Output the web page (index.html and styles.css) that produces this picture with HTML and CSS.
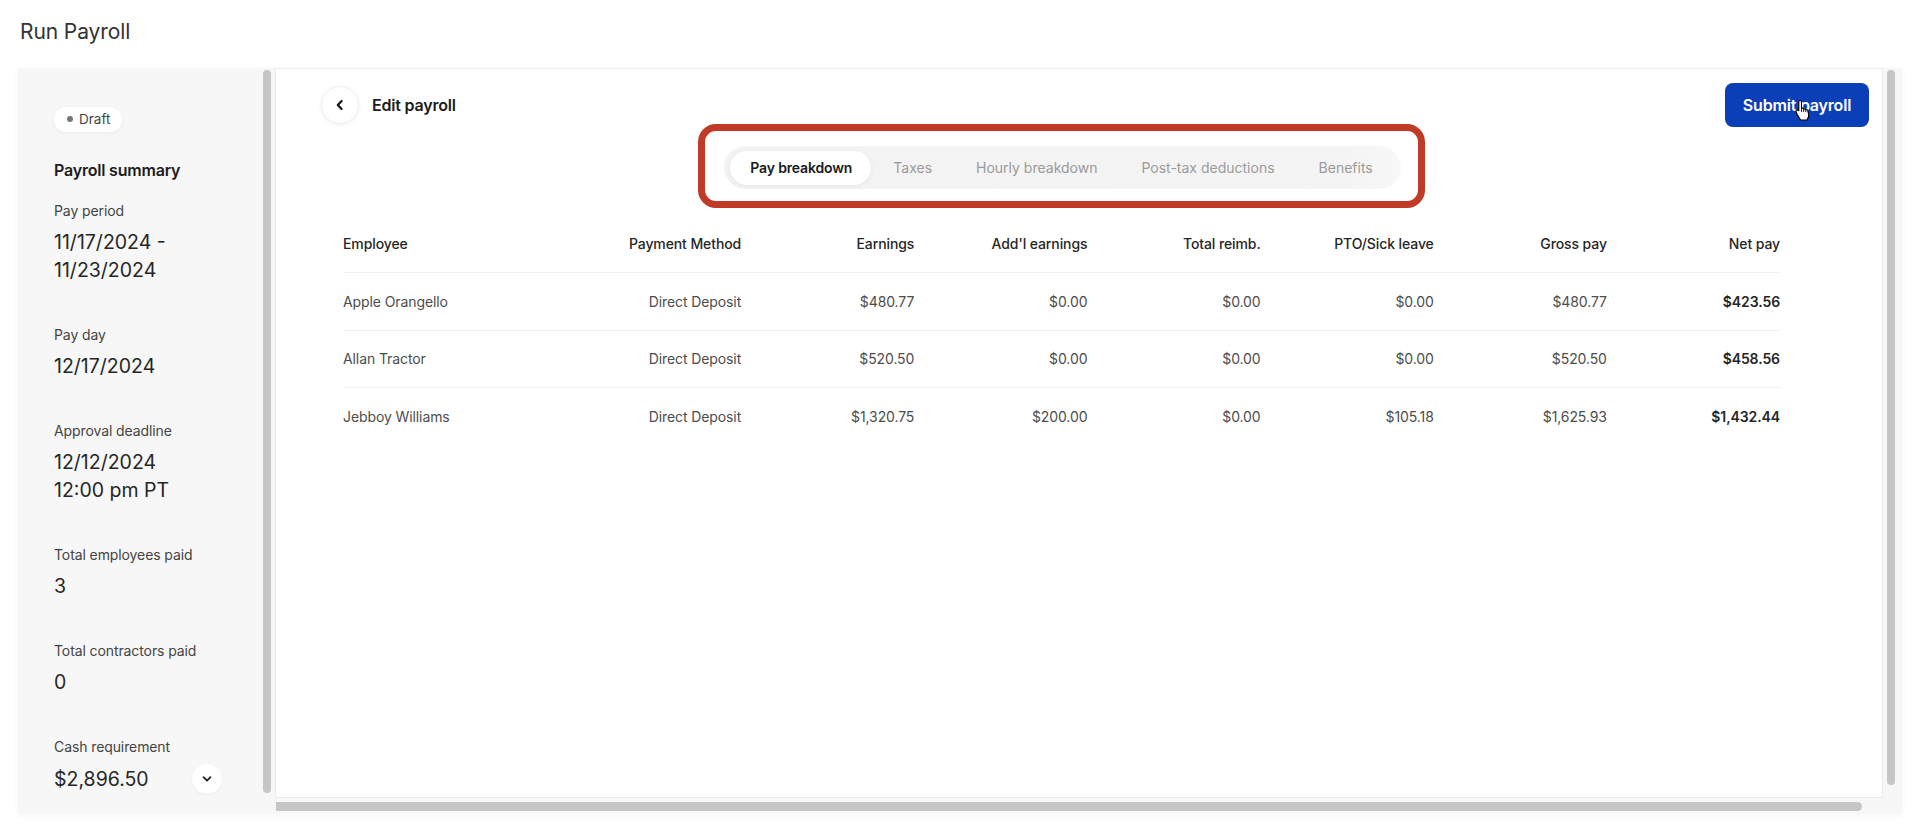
FILE: index.html
```html
<!DOCTYPE html>
<html lang="en">
<head>
<meta charset="utf-8">
<title>Run Payroll</title>
<link rel="stylesheet" href="styles.css">
</head>
<body>
<h1 class="page-title">Run Payroll</h1>
<div class="frame">
  <aside class="sidebar">
    <div class="sidebar-body">
      <span class="status-pill"><span class="status-dot"></span>Draft</span>
      <h2 class="summary-title">Payroll summary</h2>
      <div class="sum-item">
        <div class="sum-label">Pay period</div>
        <div class="sum-value">11/17/2024 -<br>11/23/2024</div>
      </div>
      <div class="sum-item">
        <div class="sum-label">Pay day</div>
        <div class="sum-value">12/17/2024</div>
      </div>
      <div class="sum-item">
        <div class="sum-label">Approval deadline</div>
        <div class="sum-value">12/12/2024<br>12:00 pm PT</div>
      </div>
      <div class="sum-item">
        <div class="sum-label">Total employees paid</div>
        <div class="sum-value">3</div>
      </div>
      <div class="sum-item">
        <div class="sum-label">Total contractors paid</div>
        <div class="sum-value">0</div>
      </div>
      <div class="sum-item">
        <div class="sum-label">Cash requirement</div>
        <div class="sum-value cash-row">
          <span>$2,896.50</span>
          <span class="round-btn small">
            <svg width="12" height="12" viewBox="0 0 12 12"><path d="M2.5 4.2 6 7.7l3.5-3.5" fill="none" stroke="#222" stroke-width="1.8" stroke-linecap="round" stroke-linejoin="round"/></svg>
          </span>
        </div>
      </div>
    </div>
    <div class="vthumb side-thumb"></div>
  </aside>

  <main class="main-col">
    <div class="panel-row">
      <section class="panel">
        <header class="panel-head">
          <div class="head-left">
            <span class="round-btn back">
              <svg width="14" height="14" viewBox="0 0 14 14"><path d="M8.6 3 4.8 7l3.8 4" fill="none" stroke="#111" stroke-width="2.2" stroke-linecap="round" stroke-linejoin="round"/></svg>
            </span>
            <span class="head-title">Edit payroll</span>
          </div>
          <button class="submit-btn">Submit payroll
            <svg class="cursor" width="17" height="22" viewBox="0 0 17 22"><path d="M5 1.5c.8 0 1.5.7 1.5 1.5v6.3c.8-.5 1.9-.2 2.2.7.8-.4 1.8-.1 2.1.8.8-.3 1.8.1 2 .9l.8 3.4c.4 1.6 0 3.3-1 4.6L12 21H5.6L2.2 15.6 1.1 13c-.4-.8 0-1.7.8-2 .7-.3 1.5 0 1.9.6V3c0-.8.5-1.5 1.2-1.5z" fill="#fff" stroke="#000" stroke-width="1.1" stroke-linejoin="round"/><path d="M6.5 9.5v3M8.7 10.2v2.4M10.8 11v1.8" stroke="#000" stroke-width=".9" stroke-linecap="round"/></svg>
          </button>
        </header>

        <div class="content">
          <div class="tabs-wrap">
            <div class="highlight">
              <nav class="tabbar">
                <span class="tab active">Pay breakdown</span>
                <span class="tab">Taxes</span>
                <span class="tab">Hourly breakdown</span>
                <span class="tab">Post-tax deductions</span>
                <span class="tab">Benefits</span>
              </nav>
            </div>
          </div>

          <div class="table">
            <div class="trow thead">
              <div class="cell left">Employee</div>
              <div class="cell">Payment Method</div>
              <div class="cell">Earnings</div>
              <div class="cell">Add'l earnings</div>
              <div class="cell">Total reimb.</div>
              <div class="cell">PTO/Sick leave</div>
              <div class="cell">Gross pay</div>
              <div class="cell">Net pay</div>
            </div>
            <div class="trow">
              <div class="cell left">Apple Orangello</div>
              <div class="cell">Direct Deposit</div>
              <div class="cell">$480.77</div>
              <div class="cell">$0.00</div>
              <div class="cell">$0.00</div>
              <div class="cell">$0.00</div>
              <div class="cell">$480.77</div>
              <div class="cell net">$423.56</div>
            </div>
            <div class="trow">
              <div class="cell left">Allan Tractor</div>
              <div class="cell">Direct Deposit</div>
              <div class="cell">$520.50</div>
              <div class="cell">$0.00</div>
              <div class="cell">$0.00</div>
              <div class="cell">$0.00</div>
              <div class="cell">$520.50</div>
              <div class="cell net">$458.56</div>
            </div>
            <div class="trow">
              <div class="cell left">Jebboy Williams</div>
              <div class="cell">Direct Deposit</div>
              <div class="cell">$1,320.75</div>
              <div class="cell">$200.00</div>
              <div class="cell">$0.00</div>
              <div class="cell">$105.18</div>
              <div class="cell">$1,625.93</div>
              <div class="cell net">$1,432.44</div>
            </div>
          </div>
        </div>
      </section>
      <div class="vthumb main-thumb"></div>
    </div>
    <div class="hthumb"></div>
  </main>
</div>
</body>
</html>
```

FILE: styles.css
```css
* { box-sizing: border-box; }

html, body {
  margin: 0;
  padding: 0;
  background: #ffffff;
  font-family: Inter, "Liberation Sans", Arial, sans-serif;
  color: #222;
}

body {
  width: 1920px;
  height: 828px;
  overflow: hidden;
}

.page-title {
  margin: 0;
  padding: 20px 0 0 20px;
  font-size: 21px;
  line-height: 24px;
  font-weight: 400;
  color: #333;
  letter-spacing: -0.1px;
}

.frame {
  margin: 24px 0 0 18px;
  width: 1884px;
  height: 746px;
  display: flex;
  background: #f7f7f7;
  box-shadow: 0 2px 8px rgba(0,0,0,0.03);
}

/* ---------- Sidebar ---------- */
.sidebar {
  display: flex;
  width: 253px;
  flex: none;
}

.sidebar-body {
  width: 245px;
  flex: none;
  padding: 38px 41px 0 36px;
}

.status-pill {
  display: inline-flex;
  align-items: center;
  gap: 6px;
  height: 25px;
  padding: 0 12px 0 13px;
  background: #fff;
  border-radius: 12px;
  box-shadow: 0 1px 4px rgba(0,0,0,0.06);
  font-size: 13.5px;
  color: #444;
}

.status-dot {
  width: 6px;
  height: 6px;
  border-radius: 50%;
  background: #777;
}

.summary-title {
  margin: 26px 0 0;
  font-size: 16px;
  line-height: 24px;
  font-weight: 600;
  color: #1c1c1c;
  letter-spacing: -0.2px;
}

.sum-item { margin-top: 41px; }
.summary-title + .sum-item { margin-top: 19px; }

.sum-label {
  font-size: 14px;
  line-height: 20px;
  color: #444;
  letter-spacing: -0.1px;
}

.sum-value {
  margin-top: 7px;
  font-size: 19.5px;
  line-height: 28px;
  color: #262626;
}

.cash-row {
  display: flex;
  align-items: center;
  justify-content: space-between;
}

.round-btn {
  display: inline-flex;
  align-items: center;
  justify-content: center;
  background: #fff;
  border-radius: 50%;
  flex: none;
}

.round-btn.small {
  width: 30px;
  height: 30px;
  box-shadow: 0 1px 3px rgba(0,0,0,0.05);
}

.vthumb {
  width: 8px;
  border-radius: 4px;
  background: #c6c6c6;
  flex: none;
}

.side-thumb {
  margin-top: 2px;
  height: 723px;
}

/* ---------- Main ---------- */
.main-col {
  display: flex;
  flex-direction: column;
  margin-left: 4px;
}

.panel-row {
  display: flex;
  height: 730px;
}

.panel {
  width: 1608px;
  flex: none;
  height: 730px;
  background: #fff;
  border: 1px solid #ececec;
  padding-top: 14px;
  position: relative;
}

.main-thumb {
  margin: 2px 0 0 4px;
  height: 715px;
}

.hthumb {
  margin: 4px 0 0 1px;
  width: 1586px;
  height: 9px;
  background: #c6c6c6;
  border-radius: 0 5px 5px 0;
}

.panel-head {
  display: flex;
  align-items: center;
  justify-content: space-between;
  height: 44px;
  padding: 0 13px 0 45px;
}

.head-left {
  display: flex;
  align-items: center;
  gap: 13px;
}

.round-btn.back {
  width: 38px;
  height: 38px;
  border: 1px solid #f1f1f1;
  box-shadow: 0 1px 4px rgba(0,0,0,0.06);
}

.head-title {
  font-size: 16px;
  font-weight: 600;
  color: #1c1c1c;
  letter-spacing: -0.2px;
}

.submit-btn {
  position: relative;
  height: 44px;
  width: 144px;
  border: none;
  border-radius: 8px;
  background: #0b3fb8;
  color: #fff;
  font-family: inherit;
  font-size: 16px;
  font-weight: 600;
  letter-spacing: -0.2px;
  padding: 0;
}

.cursor {
  position: absolute;
  left: 70px;
  top: 16px;
}

.content {
  margin-left: 67px;
  width: 1437px;
}

.tabs-wrap {
  display: flex;
  justify-content: center;
  margin-top: -3px;
}

.highlight {
  border: 7px solid #c03b27;
  border-radius: 18px;
  background: #fff;
  padding: 15px 17px 12px 19px;
}

.tabbar {
  display: flex;
  align-items: center;
  height: 43px;
  padding: 0 6px;
  background: linear-gradient(90deg, #f3f3f3 0%, #f4f4f4 92%, #f8f8f8 100%);
  border-radius: 22px;
}

.tab {
  height: 34px;
  display: inline-flex;
  align-items: center;
  padding: 0 22px;
  font-size: 14px;
  color: #9b9b9b;
  letter-spacing: 0;
  white-space: nowrap;
}

.tab.active {
  padding: 0 19px 0 20px;
  background: #fff;
  border-radius: 17px;
  color: #1a1a1a;
  font-weight: 600;
  letter-spacing: -0.15px;
  box-shadow: 0 1px 5px rgba(0,0,0,0.06);
}

.table {
  margin-top: 6px;
}

.trow {
  display: grid;
  grid-template-columns: 225px repeat(7, 1fr);
  height: 57.5px;
  align-items: center;
  border-top: 1px solid #f1f1f1;
}

.trow.thead {
  height: 58px;
  border-top: none;
}

.cell {
  text-align: right;
  font-size: 14px;
  color: #4d4d4d;
  letter-spacing: -0.1px;
  white-space: nowrap;
}

.cell.left { text-align: left; }

.thead .cell {
  color: #262626;
  font-weight: 500;
}

.cell.net {
  color: #262626;
  font-weight: 600;
}
```
